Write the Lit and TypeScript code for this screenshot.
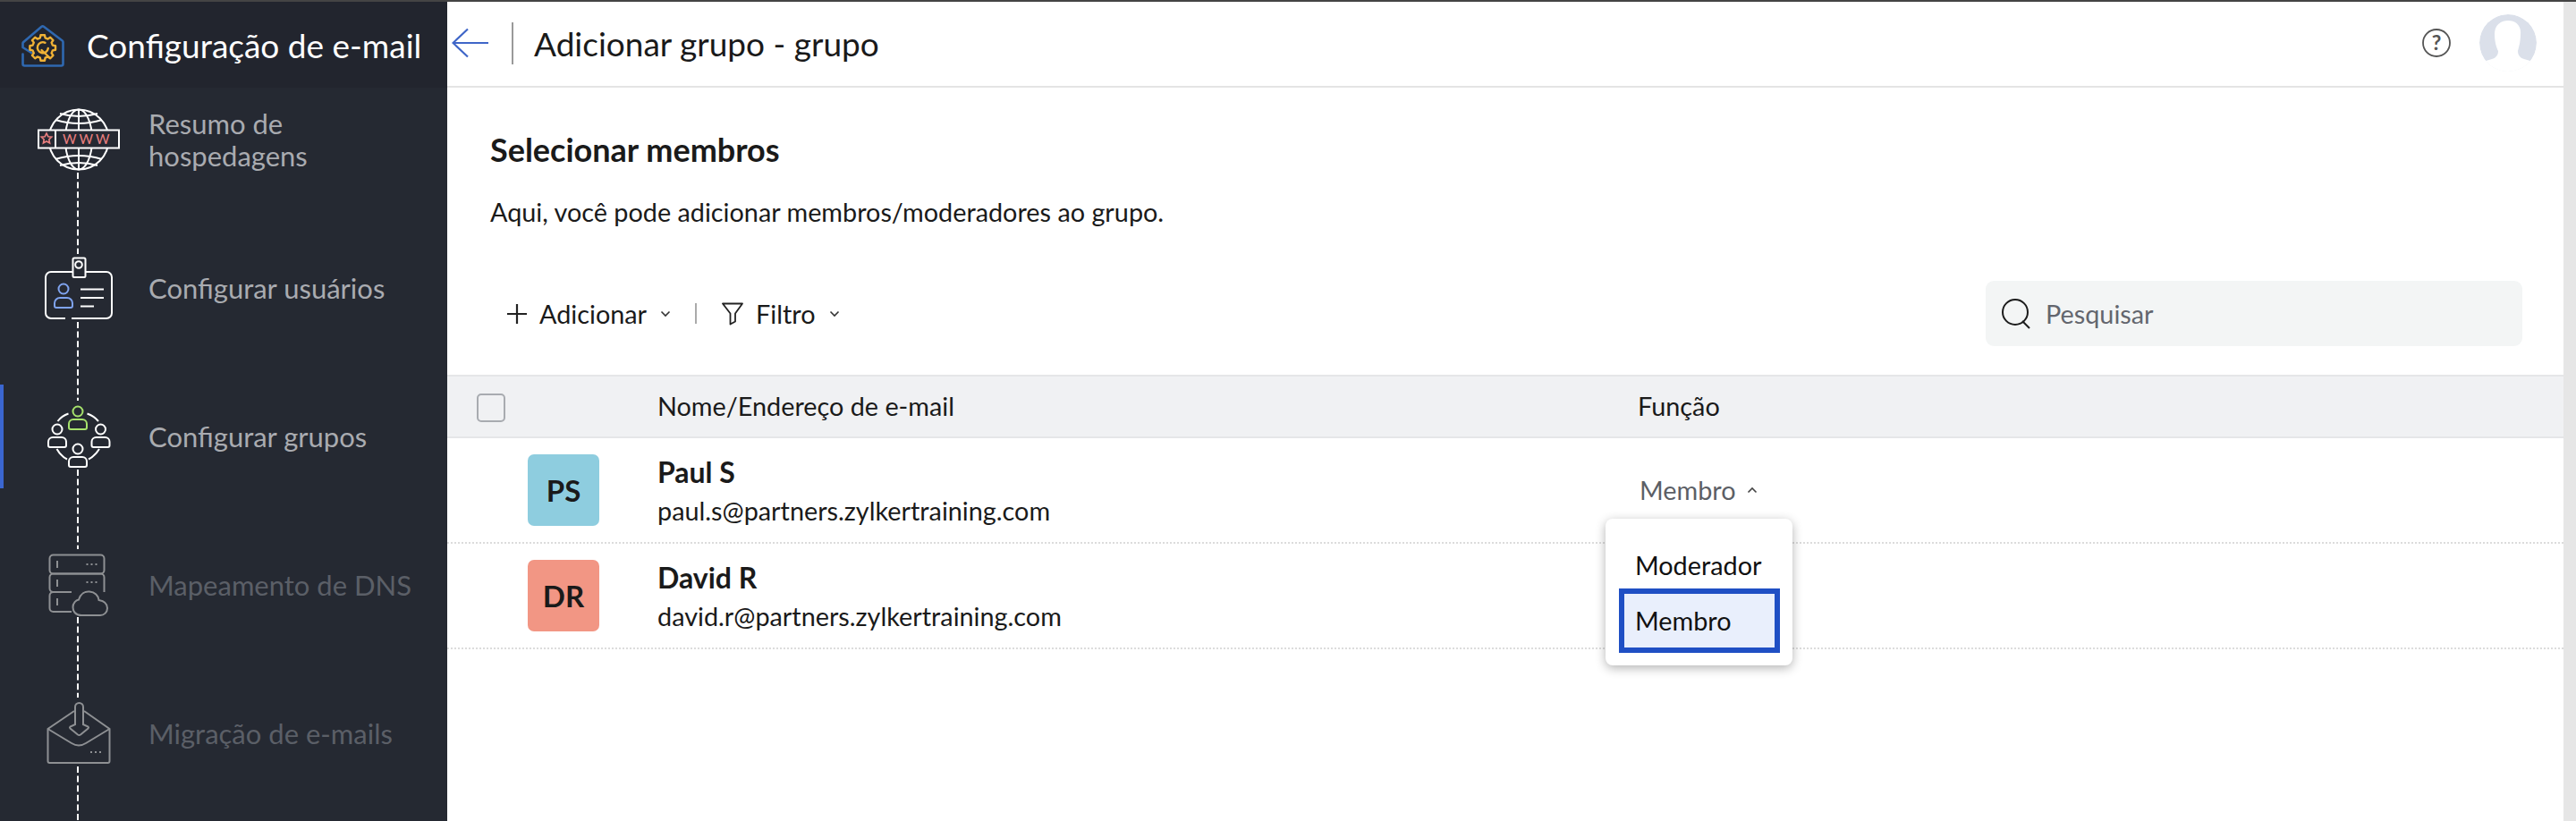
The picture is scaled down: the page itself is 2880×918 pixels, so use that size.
import { LitElement, html, css, svg } from 'lit';
import { customElement } from 'lit/decorators.js';

// gear outline for the logo, alternating outer/inner radius
function gearPath(cx: number, cy: number, ro: number, ri: number, teeth: number) {
  const pts: string[] = [];
  const step = (Math.PI * 2) / teeth;
  for (let i = 0; i < teeth; i++) {
    const a = i * step - Math.PI / 2;
    const corners: [number, number][] = [
      [a - step * 0.2, ro],
      [a + step * 0.2, ro],
      [a + step * 0.32, ri],
      [a + step * 0.68, ri],
    ];
    for (const [ang, r] of corners) {
      pts.push(`${(cx + Math.cos(ang) * r).toFixed(2)} ${(cy + Math.sin(ang) * r).toFixed(2)}`);
    }
  }
  return 'M' + pts.join('L') + 'Z';
}

const dash = (y1: number, y2: number) =>
  svg`<line class="dash" x1="87" x2="87" y1=${y1} y2=${y2}></line>`;

const globeIcon = svg`
  <g class="w">
    <circle cx="88" cy="156" r="33.500"></circle>
    <ellipse cx="88" cy="156" rx="15" ry="33.500"></ellipse>
    <line x1="88" y1="122" x2="88" y2="190"></line>
    <path d="M62 134 Q88 142 114 134M67 127 Q88 133 109 127M62 178 Q88 170 114 178M67 185 Q88 179 109 185"></path>
  </g>
  <rect x="43" y="145.500" width="90" height="20" fill="#252932" stroke="#fff" stroke-width="2"></rect>
  <line x1="62" y1="145" x2="62" y2="165" stroke="#fff" stroke-width="2"></line>
  <path d="M52 149l1.800 3.700 4 .5-3 2.800.8 4-3.600-2-3.600 2 .8-4-3-2.800 4-.5z" fill="none" stroke="#ea7f7f" stroke-width="1.600"></path>
  <text x="70" y="161" class="www">WWW</text>
  ${dash(193, 284)}`;

const cardIcon = svg`
  <g class="w">
    <path d="M73 356H57a6 6 0 0 1-6-6V310a6 6 0 0 1 6-6H81M95 304h24a6 6 0 0 1 6 6v40a6 6 0 0 1-6 6H80"></path>
    <rect x="81.500" y="288.500" width="14" height="21.500" rx="1.500"></rect>
    <circle cx="88" cy="296" r="3.800"></circle>
    <path d="M90 323.500h26M90 333h26M90 342.500h15"></path>
  </g>
  <g fill="none" stroke="#7fa3ee" stroke-width="2">
    <circle cx="71" cy="323" r="5.500"></circle>
    <path d="M61 342v-3a6 6 0 0 1 6-6h8a6 6 0 0 1 6 6v3a2 2 0 0 1-2 2H63a2 2 0 0 1-2-2z"></path>
  </g>
  ${dash(360, 448)}`;

const personShape = (x: number, y: number) =>
  svg`<circle cx=${x} cy=${y} r="5.500"></circle>
      <path d="M${x - 10} ${y + 18}v-4a5 5 0 0 1 5-5h10a5 5 0 0 1 5 5v4a2 2 0 0 1-2 2h-16a2 2 0 0 1-2-2z"></path>`;

const groupIcon = svg`
  <g fill="none" stroke="#a6e26c" stroke-width="2">${personShape(87, 460)}</g>
  <g class="w">
    ${personShape(64, 480)}
    ${personShape(112.500, 480)}
    ${personShape(87, 502)}
    <path d="M64.500 471Q69 465 76.500 462.500M97.500 462.500Q105 465 110 471M63.500 502Q68 510 75 513.500M99 513.500Q106 510 111 502"></path>
  </g>
  ${dash(525, 614)}`;

const serverIcon = svg`
  <g class="g">
    <rect x="55.500" y="620.500" width="61" height="21" rx="4"></rect>
    <path d="M80 662H59.500a4 4 0 0 1-4-4V645.500a4 4 0 0 1 4-4H112.500a4 4 0 0 1 4 4V662"></path>
    <path d="M80 684H59.500a4 4 0 0 1-4-4V666a4 4 0 0 1 4-4"></path>
    <path d="M64 627v8M64 648v8M64 669v8"></path>
    <path d="M96.500 631h2M101.500 631h2M106.500 631h2M96.500 651h2M101.500 651h2M106.500 651h2"></path>
    <path d="M90 688H91C84 688 81.500 683 81.500 679C81.500 674 85 671 88 670.500C90 664 95 661 100 661.500C106 662 110 666 110.500 671C116 672 120 675 120 680C120 685 116 688 112 688Z" fill="#252932"></path>
  </g>
  ${dash(690, 780)}`;

const mailIcon = svg`
  <g class="g">
    <path d="M83 795L53.500 815V851a2 2 0 0 0 2 2H120.500a2 2 0 0 0 2-2V815L94 795"></path>
    <path d="M53.500 815L80 831Q88 836 96 831L122.500 815"></path>
    <path d="M84 810V790.500a4.500 4.500 0 0 1 9 0V810l5.500 2.500q1 1 0 2L90 821.500q-1.500 1-3 0L78.500 814.500q-1-1 0-2z" fill="#252932"></path>
    <path d="M101 841h2M106 841h2M111 841h2"></path>
  </g>
  ${dash(857, 930)}`;

const steps = [
  { label: 'Resumo de hospedagens', icon: globeIcon, state: 'done' },
  { label: 'Configurar usuários', icon: cardIcon, state: 'done' },
  { label: 'Configurar grupos', icon: groupIcon, state: 'active' },
  { label: 'Mapeamento de DNS', icon: serverIcon, state: 'off' },
  { label: 'Migração de e-mails', icon: mailIcon, state: 'off' },
];

const members = [
  { initials: 'PS', name: 'Paul S', email: 'paul.s@partners.zylkertraining.com', color: '#8ecddf', open: true },
  { initials: 'DR', name: 'David R', email: 'david.r@partners.zylkertraining.com', color: '#f29684', open: false },
];

const chevronDown = html`<svg class="chev" width="12" height="8" viewBox="0 0 12 8"><path d="M1.500 1.500L6 6l4.500-4.500" fill="none" stroke="#333" stroke-width="1.600"></path></svg>`;

@customElement('app-root')
export class AppRoot extends LitElement {
  static styles = css`
    :host {
      display: flex;
      flex-direction: column;
      width: 2880px;
      height: 918px;
      overflow: hidden;
      background: #fff;
      font-family: 'Lato', 'Noto Sans', sans-serif;
      color: #1a1a1a;
    }
    .strip { height: 2px; background: #444; flex: none; }
    .app { display: flex; flex: 1; min-height: 0; }

    .sidebar { width: 500px; flex: none; background: #252932; display: flex; flex-direction: column; overflow: hidden; }
    .brand { height: 96px; flex: none; background: #22252e; display: flex; align-items: center; gap: 25px; padding-left: 24px; }
    .brand svg { margin-top: 4px; }
    .brand span { font-size: 37px; color: #fff; white-space: nowrap; }
    .step { height: 166px; flex: none; display: flex; align-items: flex-start; }
    .bar { width: 4px; height: 116px; flex: none; }
    .step.active .bar { background: #3b66d0; }
    .step svg { flex: none; overflow: visible; }
    .label { height: 116px; width: 300px; display: flex; align-items: center; font-size: 31px; line-height: 36px; color: #a9abb0; }
    .step.off .label { color: #5b5f67; }
    .w, .g { fill: none; stroke-width: 2; stroke: #fff; }
    .g { stroke: #8e9093; }
    .dash { stroke: #fff; stroke-width: 2; stroke-dasharray: 7 3.600; }
    .www { font-size: 15px; fill: #ea7f7f; letter-spacing: 3px; font-family: 'Lato', sans-serif; font-weight: 400; }

    .main { flex: 1; display: flex; flex-direction: column; min-width: 0; }
    .topbar { height: 96px; flex: none; box-sizing: border-box; border-bottom: 2px solid #e4e4e4; display: flex; align-items: center; padding: 0 30px 2px 5px; }
    .divider { width: 2px; height: 47px; background: #999; margin: 0 23px 0 25px; }
    .topbar h1 { font-size: 37px; font-weight: 400; margin: 0; flex: 1; }
    .help { margin-right: 32px; }
    .avatar { border-radius: 50%; display: block; }

    .content { padding: 0 46px 0 48px; }
    h2 { font-size: 36px; font-weight: 700; margin: 0; padding-top: 48px; line-height: 42px; }
    .hint { font-size: 28.800px; margin: 0; padding-top: 31px; line-height: 36px; }

    .toolbar { height: 73px; margin-top: 59px; padding-left: 19px; display: flex; align-items: center; font-size: 28.800px; }
    .tool { display: flex; align-items: center; }
    .tool svg + span { margin-left: 14px; }
    .chev { margin-left: 15px; }
    .sep { width: 2px; height: 23px; background: #aaa; margin: 0 28px 0 27px; }
    .search { margin-left: auto; width: 600px; height: 73px; box-sizing: border-box; background: #f3f5f5; border-radius: 9px; display: flex; align-items: center; gap: 17px; padding-left: 18px; color: #63666e; }
    .search svg + span { margin-left: 0; }

    .table { margin: 32px -46px 0 -48px; font-size: 28.800px; }
    .row { display: grid; grid-template-columns: 90px 145px 1096px 1fr; align-items: center; }
    .head { height: 71px; box-sizing: border-box; background: #f0f1f3; border-top: 2px solid #e5e6e8; border-bottom: 2px solid #e5e6e8; padding-bottom: 2px; }
    .check { width: 32px; height: 32px; box-sizing: border-box; border: 2px solid #a8abb0; border-radius: 5px; margin: 4px 0 0 33px; }
    .head .name-col { grid-column: 3; }
    .member { height: 118px; box-sizing: border-box; border-bottom: 2px dotted #dcdcdc; }
    .initials { grid-column: 2; width: 80px; height: 80px; border-radius: 7px; display: flex; align-items: center; justify-content: center; font-size: 33px; font-weight: 700; }
    .name { font-size: 32px; font-weight: 700; line-height: 38px; margin-top: 2px; }
    .email { line-height: 36px; margin-top: 6px; }
    .role { position: relative; display: flex; align-items: center; color: #5c5f66; align-self: stretch; padding-left: 2px; }
    .role svg { margin-left: 12px; }
    .menu { position: absolute; left: -36px; top: 90px; width: 209px; height: 164px; box-sizing: border-box; background: #fff; border-radius: 8px; box-shadow: 0 3px 12px rgba(0, 0, 0, 0.3); padding: 25px 14px 0 15px; color: #111; z-index: 2; }
    .opt { height: 53px; padding-left: 18px; display: flex; align-items: center; }
    .opt.sel { height: 72px; box-sizing: border-box; padding-left: 12px; border: 6px solid #1f4fc4; background: #e9effc; }

    .scroll { width: 14px; flex: none; background: #e6e6e6; }
  `;

  render() {
    return html`
      <div class="strip"></div>
      <div class="app">
        ${this.renderSidebar()}
        <div class="main">
          ${this.renderTopbar()}
          <div class="content">
            <h2>Selecionar membros</h2>
            <p class="hint">Aqui, você pode adicionar membros/moderadores ao grupo.</p>
            ${this.renderToolbar()}
            ${this.renderTable()}
          </div>
        </div>
        <div class="scroll"></div>
      </div>
    `;
  }

  renderSidebar() {
    return html`
      <div class="sidebar">
        <div class="brand">
          <svg width="48" height="48" viewBox="24 26 48 48">
            <path d="M35 57L25.500 51V46.500a2 2 0 0 1 .8-1.600L46.500 27.800a2 2 0 0 1 2.400 0L69.700 43.500a2 2 0 0 1 .8 1.600V69.500a2 2 0 0 1-2 2H27.500a2 2 0 0 1-2-2V58.500" fill="none" stroke="#2f68b0" stroke-width="2.600" stroke-linecap="round" stroke-linejoin="round"></path>
            <path d=${gearPath(47.7, 51.5, 14.5, 11.5, 8)} fill="#22252e" stroke="#f0b236" stroke-width="2.400" stroke-linejoin="round"></path>
            <path d="M50.500 45.800A6 6 0 1 0 53.800 52M46.500 54L56 63" fill="none" stroke="#f0b236" stroke-width="2.400" stroke-linecap="round"></path>
          </svg>
          <span>Configuração de e-mail</span>
        </div>
        ${steps.map((s, i) => html`
          <div class="step ${s.state}">
            <div class="bar"></div>
            <svg width="162" height="166" viewBox="4 ${98 + i * 166} 162 166">${s.icon}</svg>
            <div class="label">${s.label}</div>
          </div>
        `)}
      </div>
    `;
  }

  renderTopbar() {
    return html`
      <div class="topbar">
        <svg width="42" height="34" viewBox="0 0 42 34">
          <path d="M41 17H2M18 1.500L1.500 17L18 32.500" fill="none" stroke="#3f66c8" stroke-width="2.200"></path>
        </svg>
        <div class="divider"></div>
        <h1>Adicionar grupo - grupo</h1>
        <svg class="help" width="32" height="32" viewBox="0 0 32 32">
          <circle cx="16" cy="16" r="15" fill="none" stroke="#555" stroke-width="1.800"></circle>
          <text x="16" y="24" text-anchor="middle" font-size="23" font-weight="700" fill="#555" font-family="Lato, sans-serif">?</text>
        </svg>
        <svg class="avatar" width="64" height="64" viewBox="0 0 64 64">
          <circle cx="32" cy="32" r="32" fill="#dbe0ea"></circle>
          <path d="M17 22C17 11 25 7 32 7C40 7 47 12 46 22C46 31 44 37 43 41C43 46 46 49 50 50L60 53V64H4V53L14 50C18 49 21 46 21 41C19 37 17 31 17 22Z" fill="#fff"></path>
        </svg>
      </div>
    `;
  }

  renderToolbar() {
    return html`
      <div class="toolbar">
        <div class="tool">
          <svg width="22" height="22" viewBox="0 0 22 22"><path d="M11 0V22M0 11H22" stroke="#222" stroke-width="2.200"></path></svg>
          <span>Adicionar</span>${chevronDown}
        </div>
        <div class="sep"></div>
        <div class="tool">
          <svg width="24" height="26" viewBox="0 0 24 26"><path d="M1 1.500H23L15 12.500V21.500L9.500 24.500V12.500Z" fill="none" stroke="#222" stroke-width="1.800" stroke-linejoin="round"></path></svg>
          <span>Filtro</span>${chevronDown}
        </div>
        <div class="search">
          <svg width="32" height="34" viewBox="0 0 32 34">
            <circle cx="15" cy="15" r="14" fill="none" stroke="#1c1c1c" stroke-width="2"></circle>
            <path d="M23 25L31 33" stroke="#1c1c1c" stroke-width="2"></path>
          </svg>
          <span>Pesquisar</span>
        </div>
      </div>
    `;
  }

  renderTable() {
    return html`
      <div class="table">
        <div class="row head">
          <div class="check"></div>
          <div class="name-col">Nome/Endereço de e-mail</div>
          <div>Função</div>
        </div>
        ${members.map((m) => html`
          <div class="row member">
            <div class="initials" style="background:${m.color}">${m.initials}</div>
            <div>
              <div class="name">${m.name}</div>
              <div class="email">${m.email}</div>
            </div>
            ${m.open ? html`
              <div class="role">
                <span>Membro</span>
                <svg width="12" height="8" viewBox="0 0 12 8"><path d="M1.500 6.500L6 2l4.500 4.500" fill="none" stroke="#444" stroke-width="1.600"></path></svg>
                <div class="menu">
                  <div class="opt">Moderador</div>
                  <div class="opt sel">Membro</div>
                </div>
              </div>
            ` : html`<div></div>`}
          </div>
        `)}
      </div>
    `;
  }
}
